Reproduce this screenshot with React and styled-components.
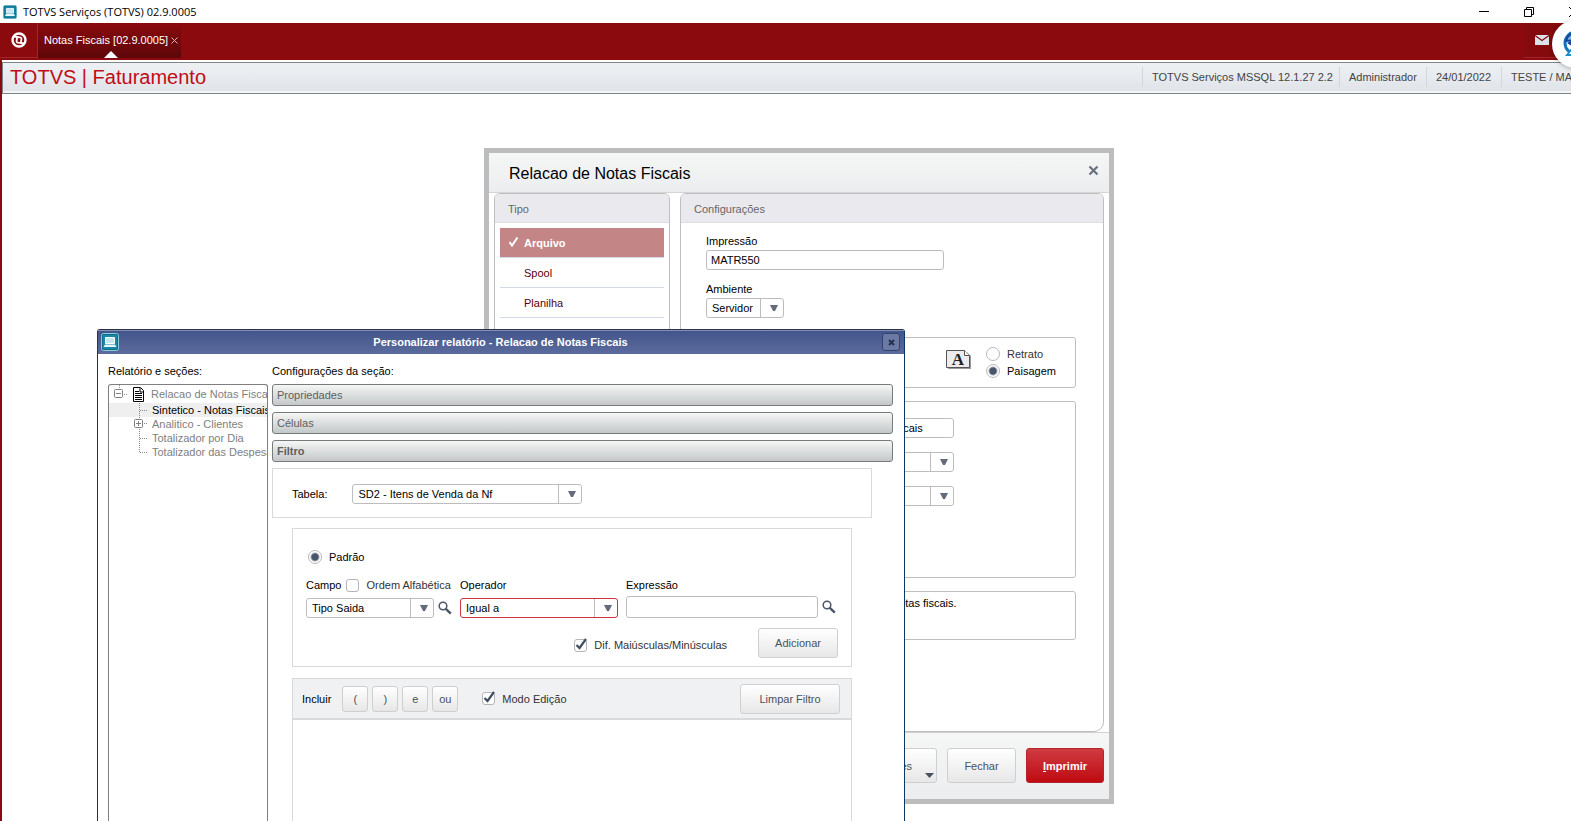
import React, { useState } from 'react';
import styled, { createGlobalStyle, css } from 'styled-components';

const GlobalStyle = createGlobalStyle`
  * {
    box-sizing: border-box;
  }

  body {
    margin: 0;
    background: #fff;
    color: #000;
    font-family: "Liberation Sans", Arial, sans-serif;
    font-size: 11px;
    line-height: 14px;
  }

  button, input, select, textarea {
    margin: 0;
    font: inherit;
    color: inherit;
  }

  button {
    cursor: pointer;
  }
`;

const Screen = styled.div`
  display: flex;
  flex-direction: column;
  height: 100vh;
  overflow: hidden;
  position: relative;
`;

/* system window */

const TitleBar = styled.header`
  display: flex;
  align-items: center;
  gap: 6px;
  flex: none;
  height: 23px;
  padding-left: 3px;
  font-family: "Open Sans", "Noto Sans", sans-serif;
  font-size: 11px;
  line-height: 16px;
`;

const SystemButtons = styled.div`
  display: flex;
  align-items: center;
  gap: 33px;
  margin-left: auto;
  margin-right: -9px;
`;

const BareButton = styled.button`
  display: flex;
  align-items: center;
  justify-content: center;
  padding: 0;
  border: 0;
  background: none;
`;

const TabBar = styled.nav`
  display: flex;
  flex: none;
  height: 37px;
  padding-bottom: 2px;
  background: #8a0a0e;
  color: #fff;
`;

const HomeButton = styled(BareButton)`
  width: 38px;
  border-right: 1px solid #a0272b;
  border-bottom: 1px solid #a0272b;
`;

const Tab = styled.div`
  display: flex;
  flex-direction: column;
  align-items: center;
  justify-content: space-between;
  padding: 10px 3px 0 6px;
  background: linear-gradient(#8a0a0e, #5e0709);
`;

const TabLabel = styled.div`
  display: flex;
  align-items: center;
  gap: 3px;
`;

const MailButton = styled(BareButton)`
  width: 36px;
  margin-left: auto;
  margin-right: 11px;
  border-bottom: 1px solid #9c2529;
  background: #840a0d;
`;

const Bubble = styled.div`
  position: absolute;
  top: 20px;
  right: -29px;
  display: flex;
  align-items: center;
  justify-content: center;
  width: 48px;
  height: 48px;
  border-radius: 50%;
  background: #fff;
  box-shadow: 0 1px 4px rgba(0, 0, 0, 0.3);
`;

const AppFrame = styled.div`
  display: flex;
  flex-direction: column;
  flex: 1;
  min-height: 0;
  padding-top: 2px;
  border-left: 2px solid #8a0a0e;
`;

const AppBar = styled.div`
  display: flex;
  align-items: center;
  flex: none;
  height: 32px;
  padding-bottom: 2px;
  border: solid #7f8486;
  border-width: 1px 0 1px 1px;
  background: linear-gradient(#eef1f4, #dfe3e8);
  box-shadow: inset 0 -2px #f2f4f6;
`;

const AppTitle = styled.h1`
  flex: 1;
  margin: 0;
  padding-left: 7px;
  color: #c00d15;
  font-size: 20px;
  font-weight: normal;
  line-height: 24px;
`;

const AppInfo = styled.span`
  flex: none;
  width: ${(p) => p.$width}px;
  padding: 3px 0 3px 9px;
  border-left: 1px solid #d3d7d9;
  color: #444;
  overflow: hidden;
  white-space: nowrap;
`;

const Desktop = styled.main`
  position: relative;
  flex: 1;
`;

/* controls */

const TextInput = styled.input`
  width: ${(p) => p.$width}px;
  height: ${(p) => (p.$tall ? 22 : 20)}px;
  padding: 0 4px;
  border: 1px solid #bdbdbd;
  border-radius: 3px;
  background: #fff;
  outline: 0;
`;

const SelectFrame = styled.span`
  display: grid;
  grid-template-columns: 1fr 23px;
  flex: none;
  width: ${(p) => p.$width}px;
  height: 20px;
  border: 1px solid ${(p) => (p.$required ? '#d0353d' : '#bdbdbd')};
  border-radius: 3px;
  background: #fff;
`;

const NativeSelect = styled.select`
  grid-area: 1 / 1 / 2 / 3;
  width: 100%;
  padding: 0 23px 0 5px;
  border: 0;
  background: none;
  appearance: none;
  outline: 0;
`;

const SelectArrow = styled.span`
  grid-area: 1 / 2;
  display: flex;
  align-items: center;
  justify-content: center;
  padding-left: 3px;
  border-left: 1px solid #bdbdbd;
  pointer-events: none;
`;

const Select = ({ id, options, width, required }) => (
  <SelectFrame $width={width} $required={required}>
    <NativeSelect id={id}>
      {options.map((o) => (
        <option key={o}>{o}</option>
      ))}
    </NativeSelect>
    <SelectArrow>
      <svg width="8" height="6" viewBox="0 0 8 6">
        <path d="M0 0h8L5 6H3z" fill="#646b7b" />
      </svg>
    </SelectArrow>
  </SelectFrame>
);

const Option = styled.label`
  display: flex;
  align-items: center;
  gap: 7px;
  color: ${(p) => p.$color || '#000'};
  white-space: nowrap;
`;

const Radio = styled.input.attrs({ type: 'radio' })`
  width: 14px;
  height: 14px;
  border: 1px solid #b9b9b9;
  border-radius: 50%;
  background: #fff;
  appearance: none;

  &:checked {
    background: radial-gradient(circle, #47546a 3px, #fff 5px);
  }
`;

const CheckFrame = styled.span`
  display: grid;
  width: 13px;
  height: 13px;

  > * {
    grid-area: 1 / 1;
  }

  svg {
    overflow: visible;
    pointer-events: none;
  }
`;

const CheckInput = styled.input.attrs({ type: 'checkbox' })`
  width: 13px;
  height: 13px;
  border: 1px solid #b5b5b5;
  border-radius: 3px;
  background: #fff;
  appearance: none;
`;

const Checkbox = ({ defaultChecked = false }) => {
  const [checked, setChecked] = useState(defaultChecked);
  return (
    <CheckFrame>
      <CheckInput checked={checked} onChange={(e) => setChecked(e.target.checked)} />
      {checked && (
        <svg width="13" height="13" viewBox="0 0 13 13">
          <path d="M2.5 6l3 3L12 0" fill="none" stroke="#414d61" strokeWidth="2.2" />
        </svg>
      )}
    </CheckFrame>
  );
};

const Button = styled.button`
  flex: none;
  width: ${(p) => p.$width}px;
  height: ${(p) => p.$height || 30}px;
  padding: 0;
  border: 1px solid #cfcfcf;
  border-radius: 3px;
  background: linear-gradient(#fff, #e7e7e7);
  color: #4a5160;

  ${(p) =>
    p.$primary &&
    css`
      border-color: #b5242a;
      background: linear-gradient(#cf3b41, #bf0a12);
      color: #fff;
      font-weight: bold;
    `}
`;

const SearchButton = ({ label }) => (
  <BareButton aria-label={label}>
    <svg width="14" height="14" viewBox="0 0 14 14" fill="none" stroke="#4a5569">
      <circle cx="5" cy="5" r="3.8" strokeWidth="1.5" />
      <path d="M7.8 7.8l5 4.8" strokeWidth="2.4" />
    </svg>
  </BareButton>
);

const ProgramIcon = ({ size }) => (
  <svg width={size} height={size} viewBox="0 0 18 18">
    <rect x=".5" y=".5" width="17" height="17" rx="2" fill="#1787a5" stroke="#8ccbd9" />
    <rect x="1.5" y="1.5" width="15" height="15" rx="1" fill="none" stroke="#0d6f8b" />
    <path d="M4.500 4.500h9v6h-9z" fill="#c4e6ef" stroke="#fff" />
    <path d="M4 11.500h10l1.500 2.500h-13z" fill="#e9f5f8" />
  </svg>
);

/* print dialog */

const PrintDialog = styled.section`
  position: absolute;
  left: 482px;
  top: 54px;
  width: 630px;
  border: 5px solid #bdbdbd;
  background: #fff;
`;

const DialogHeader = styled.div`
  display: flex;
  align-items: center;
  justify-content: space-between;
  height: 40px;
  padding: 0 10px 0 20px;
  border-bottom: 1px solid #d3d5d7;
  background: linear-gradient(#f5f7f6, #ebedef);
`;

const DialogClose = styled(BareButton)`
  padding-bottom: 4px;
`;

const DialogTitle = styled.h2`
  margin: 0;
  padding-top: 2px;
  font-size: 16px;
  font-weight: normal;
  line-height: 20px;
`;

const DialogColumns = styled.div`
  display: grid;
  grid-template-columns: 176px 1fr;
  gap: 10px;
  padding: 0 5px;
`;

const Panel = styled.div`
  border: 1px solid #bfbfbf;
  border-radius: 6px 6px 10px 10px;
  overflow: hidden;
`;

const PanelTitle = styled.h3`
  margin: 0;
  padding: 8px 13px 6px;
  border-bottom: 1px solid #dedee2;
  background: #eaeaee;
  color: #666;
  font-size: 11px;
  font-weight: normal;
`;

const TypeList = styled.ul`
  margin: 0;
  padding: 5px;
  list-style: none;
`;

const TypeItem = styled.li`
  border-bottom: 1px solid #d3dbeb;
`;

const TypeButton = styled.button`
  display: flex;
  align-items: center;
  gap: 5px;
  width: 100%;
  height: 29px;
  padding: 0 0 0 ${(p) => (p.$active ? 8 : 24)}px;
  border: 0;
  background: ${(p) => (p.$active ? '#c48586' : 'none')};
  color: ${(p) => (p.$active ? '#fff' : '#5a0009')};
  font-weight: ${(p) => (p.$active ? 'bold' : 'normal')};
`;

const PrintForm = styled.div`
  display: flex;
  flex-direction: column;
  padding: 11px 27px 91px 25px;
`;

const Field = styled.div`
  display: flex;
  flex-direction: column;
  gap: ${(p) => p.$gap}px;
`;

const PrintField = styled(Field)`
  margin-bottom: 12px;
`;

const GroupBox = styled.div`
  margin-top: ${(p) => (p.$first ? 7 : 13)}px;
  border: 1px solid #bfbfbf;
  border-radius: 3px;
`;

const Orientation = styled(GroupBox)`
  display: flex;
  align-items: center;
  justify-content: flex-end;
  gap: 14px;
  height: 51px;
`;

const PageIcon = styled.svg`
  margin-bottom: 6px;
`;

const OrientationOptions = styled.div`
  display: grid;
  gap: 3px;
  width: 89px;
`;

const ReportOptions = styled(GroupBox)`
  display: grid;
  grid-template-columns: 72px 1fr;
  grid-auto-rows: 20px;
  align-items: center;
  row-gap: 14px;
  height: 177px;
  padding: 16px 14px;
`;

const Description = styled(GroupBox)`
  height: 49px;
  padding: 4px 2px;
`;

const DialogFooter = styled.div`
  display: flex;
  justify-content: flex-end;
  gap: 10px;
  padding: 15px 5px 16px;
  border-top: 1px solid #cfd1d3;
  background: linear-gradient(#f5f7f6, #ebedef);
`;

const MenuButton = styled(Button)`
  display: flex;
  align-items: center;
  justify-content: space-between;
  padding: 0 2px 0 18px;

  svg {
    align-self: flex-end;
    margin-bottom: 4px;
  }
`;

/* report customization window */

const ReportWindow = styled.section`
  position: absolute;
  left: 95px;
  top: 235px;
  bottom: 0;
  display: flex;
  flex-direction: column;
  width: 808px;
  border: solid #0a3a66;
  border-width: 1px 1px 0;
  border-top-color: #2b3245;
  border-radius: 3px 3px 0 0;
  background: #fff;
`;

const WindowBar = styled.div`
  display: grid;
  grid-template-columns: 18px 1fr 18px;
  align-items: center;
  flex: none;
  height: 24px;
  padding: 0 4px 0 3px;
  background: linear-gradient(#41548a, #5c6b9d);
  box-shadow: inset 0 1px #8390b5;
  color: #fff;
  text-align: center;
`;

const WindowTitle = styled.h2`
  margin: 0;
  font-size: 11px;
  font-weight: bold;
`;

const WindowClose = styled(BareButton)`
  width: 18px;
  height: 18px;
  border: 1px solid #33426f;
  border-radius: 3px;
  background: #6b79a5;
`;

const WindowBody = styled.div`
  display: grid;
  grid-template-columns: 160px 1fr;
  gap: 4px;
  flex: 1;
  min-height: 0;
  padding: 10px 11px 0 10px;
`;

const WindowColumn = styled.div`
  display: flex;
  flex-direction: column;
  gap: 6px;
  min-width: 0;
`;

const TreeView = styled.ul`
  flex: 1;
  margin: 0;
  padding: 0;
  border: 1px solid #7f7f7f;
  border-bottom: 0;
  border-radius: 3px 3px 0 0;
  list-style: none;
  overflow: hidden;
`;

const TreeNode = styled.li`
  display: flex;
  align-items: center;
  height: ${(p) => (p.$root ? 18 : 14)}px;
  background: ${(p) => (p.$selected ? '#efefef' : 'none')};
  color: ${(p) => (p.$selected ? '#000' : '#808080')};
  white-space: nowrap;

  svg {
    flex: none;
  }
`;

const Accordion = styled.button`
  flex: none;
  height: 22px;
  padding: 0 4px;
  border: 1px solid #777b7b;
  border-radius: 3px;
  background: linear-gradient(#f5f6f6, #c3c8c8);
  color: #5f5f5f;
  font-weight: ${(p) => (p.$open ? 'bold' : 'normal')};
  text-align: left;
`;

const TableBox = styled.div`
  display: flex;
  align-items: center;
  gap: 25px;
  flex: none;
  height: 50px;
  margin-right: 21px;
  padding: 2px 0 0 19px;
  border: 1px solid #d9d9d9;
`;

const FilterBox = styled.div`
  display: flex;
  flex-direction: column;
  margin: 4px 41px 0 20px;
  padding: 21px 13px 8px;
  border: 1px solid #d9d9d9;
`;

const ModeOption = styled(Option)`
  padding-left: 2px;
`;

const FilterFields = styled.div`
  display: flex;
  align-items: flex-end;
  gap: 8px;
  margin: 14px 0 10px;
`;

const FieldHeading = styled.div`
  display: flex;
  gap: 5px;
  height: 14px;
`;

const WithSearch = styled.div`
  display: flex;
  align-items: center;
  gap: 4px;
`;

const FilterActions = styled.div`
  display: flex;
  align-items: center;
  justify-content: flex-end;
  gap: 31px;
`;

const CaseOption = styled(Option)`
  padding-top: 4px;
`;

const Expression = styled.div`
  display: flex;
  flex-direction: column;
  flex: 1;
  margin: 5px 41px 0 20px;
  border: 1px solid #d9d9d9;
  border-bottom: 0;
`;

const ExpressionBar = styled.div`
  display: flex;
  align-items: center;
  height: 41px;
  padding: 0 11px 0 9px;
  border-bottom: 2px solid #d9d9d9;
  background: #f0f1f3;
`;

const Tokens = styled.div`
  display: flex;
  gap: 4px;
  margin: 0 24px 0 11px;
`;

const ClearButton = styled(Button)`
  margin-left: auto;
`;

const ExpressionText = styled.textarea`
  flex: 1;
  border: 0;
  outline: 0;
  resize: none;
`;

const types = ['Arquivo', 'Spool', 'Planilha'];
const tokens = ['(', ')', 'e', 'ou'];

const PrintSettings = () => (
  <PrintDialog>
    <DialogHeader>
      <DialogTitle>Relacao de Notas Fiscais</DialogTitle>
      <DialogClose aria-label="Fechar janela">
        <svg width="11" height="11" viewBox="0 0 11 11">
          <path d="M1.5 1.5l8 8M9.5 1.5l-8 8" stroke="#69707e" strokeWidth="2.2" />
        </svg>
      </DialogClose>
    </DialogHeader>
    <DialogColumns>
      <Panel>
        <PanelTitle>Tipo</PanelTitle>
        <TypeList>
          {types.map((type, i) => (
            <TypeItem key={type}>
              <TypeButton $active={i === 0}>
                {i === 0 && (
                  <svg width="11" height="11" viewBox="0 0 11 11">
                    <path d="M1.500 5l2.500 3.500L9.500.5" fill="none" stroke="#fff" strokeWidth="2" />
                  </svg>
                )}
                {type}
              </TypeButton>
            </TypeItem>
          ))}
        </TypeList>
      </Panel>
      <Panel>
        <PanelTitle>Configurações</PanelTitle>
        <PrintForm>
          <PrintField $gap={2}>
            <label htmlFor="impressao">Impressão</label>
            <TextInput id="impressao" $width={238} defaultValue="MATR550" />
          </PrintField>
          <PrintField $gap={2}>
            <label htmlFor="ambiente">Ambiente</label>
            <Select id="ambiente" width={78} options={['Servidor']} />
          </PrintField>
          <Orientation $first>
            <PageIcon width="26" height="20" viewBox="0 0 26 20">
              <path d="M2 2h19l4 4v13H2z" fill="#9a9a9a" />
              <path d="M.5.5h18l5 5v12H.5z" fill="#ececec" stroke="#555" />
              <path d="M18.5.5v5h5" fill="#fff" stroke="#555" />
              <text x="12" y="15" textAnchor="middle" fontFamily="Liberation Serif, serif" fontSize="17" fontWeight="bold" fill="#222">
                A
              </text>
            </PageIcon>
            <OrientationOptions>
              <Option $color="#333">
                <Radio name="orientacao" />
                Retrato
              </Option>
              <Option>
                <Radio name="orientacao" defaultChecked />
                Paisagem
              </Option>
            </OrientationOptions>
          </Orientation>
          <ReportOptions>
            <label htmlFor="titulo">Título</label>
            <TextInput id="titulo" $width={161} defaultValue="Relacao de Notas Fiscais" />
            <label htmlFor="ordem">Ordem</label>
            <Select id="ordem" width={161} options={['Nota']} />
            <label htmlFor="layout">Layout</label>
            <Select id="layout" width={161} options={['Padrão']} />
          </ReportOptions>
          <Description>Este programa ira emitir a relacao de notas fiscais.</Description>
        </PrintForm>
      </Panel>
    </DialogColumns>
    <DialogFooter>
      <MenuButton $width={110} $height={35}>
        Outras Ações
        <svg width="9" height="5" viewBox="0 0 9 5">
          <path d="M0 0h9L4.500 5z" fill="#4a5160" />
        </svg>
      </MenuButton>
      <Button $width={69} $height={35}>
        Fechar
      </Button>
      <Button $width={78} $height={35} $primary>
        <u>I</u>mprimir
      </Button>
    </DialogFooter>
  </PrintDialog>
);

const dots = { fill: 'none', stroke: '#8a8a8a', strokeDasharray: '1 1' };

const SectionTree = () => (
  <TreeView>
    <TreeNode $root>
      <svg width="42" height="18" viewBox="0 0 42 18">
        <path d="M10.500 0v5M15 9.500h4" {...dots} />
        <rect x="5.500" y="4.500" width="8" height="8" rx="1" fill="#fff" stroke="#808080" />
        <path d="M7 8.500h5" stroke="#808080" />
        <path d="M24.500 2.500h7l3 3v11h-10z" fill="#fff" stroke="#000" />
        <path d="M31 3v4h4M26 6.500h4M26 8.500h7M26 10.500h7M26 12.500h7M26 14.500h7" fill="none" stroke="#000" />
      </svg>
      Relacao de Notas Fiscais
    </TreeNode>
    <TreeNode $selected>
      <svg width="43" height="14" viewBox="0 0 43 14">
        <path d="M30.500 0v14M31 7.500h8" {...dots} />
      </svg>
      Sintetico - Notas Fiscais
    </TreeNode>
    <TreeNode>
      <svg width="43" height="14" viewBox="0 0 43 14">
        <path d="M30.500 0v14M35 6.500h4" {...dots} />
        <rect x="25.500" y="2.500" width="8" height="8" rx="1" fill="#fff" stroke="#808080" />
        <path d="M27 6.500h5M29.500 4v5" stroke="#808080" />
      </svg>
      Analitico - Clientes
    </TreeNode>
    <TreeNode>
      <svg width="43" height="14" viewBox="0 0 43 14">
        <path d="M30.500 0v14M31 7.500h8" {...dots} />
      </svg>
      Totalizador por Dia
    </TreeNode>
    <TreeNode>
      <svg width="43" height="14" viewBox="0 0 43 14">
        <path d="M30.500 0v7.500h8" {...dots} />
      </svg>
      Totalizador das Despesas
    </TreeNode>
  </TreeView>
);

const CustomizeReport = () => (
  <ReportWindow>
    <WindowBar>
      <ProgramIcon size={18} />
      <WindowTitle>Personalizar relatório - Relacao de Notas Fiscais</WindowTitle>
      <WindowClose aria-label="Fechar janela">
        <svg width="7" height="7" viewBox="0 0 7 7">
          <path d="M1 1l5 5M6 1L1 6" stroke="#252d4a" strokeWidth="1.800" />
        </svg>
      </WindowClose>
    </WindowBar>
    <WindowBody>
      <WindowColumn>
        <span>Relatório e seções:</span>
        <SectionTree />
      </WindowColumn>
      <WindowColumn>
        <span>Configurações da seção:</span>
        <Accordion>Propriedades</Accordion>
        <Accordion>Células</Accordion>
        <Accordion $open>Filtro</Accordion>
        <TableBox>
          <label htmlFor="tabela">Tabela:</label>
          <Select id="tabela" width={230} options={['SD2 - Itens de Venda da Nf']} />
        </TableBox>
        <FilterBox>
          <ModeOption>
            <Radio name="modo" defaultChecked />
            Padrão
          </ModeOption>
          <FilterFields>
            <Field $gap={6}>
              <FieldHeading>
                <label htmlFor="campo">Campo</label>
                <Option $color="#333">
                  <Checkbox />
                  Ordem Alfabética
                </Option>
              </FieldHeading>
              <WithSearch>
                <Select id="campo" width={128} options={['Tipo Saida']} />
                <SearchButton label="Pesquisar campo" />
              </WithSearch>
            </Field>
            <Field $gap={6}>
              <label htmlFor="operador">Operador</label>
              <Select id="operador" width={158} options={['Igual a']} required />
            </Field>
            <Field $gap={4}>
              <label htmlFor="expressao">Expressão</label>
              <WithSearch>
                <TextInput id="expressao" $width={192} $tall />
                <SearchButton label="Pesquisar expressão" />
              </WithSearch>
            </Field>
          </FilterFields>
          <FilterActions>
            <CaseOption $color="#333">
              <Checkbox defaultChecked />
              Dif. Maiúsculas/Minúsculas
            </CaseOption>
            <Button $width={80}>Adicionar</Button>
          </FilterActions>
        </FilterBox>
        <Expression>
          <ExpressionBar>
            <span>Incluir</span>
            <Tokens>
              {tokens.map((token) => (
                <Button key={token} $width={26} $height={26}>
                  {token}
                </Button>
              ))}
            </Tokens>
            <Option $color="#333">
              <Checkbox defaultChecked />
              Modo Edição
            </Option>
            <ClearButton $width={100}>Limpar Filtro</ClearButton>
          </ExpressionBar>
          <ExpressionText aria-label="Filtro" />
        </Expression>
      </WindowColumn>
    </WindowBody>
  </ReportWindow>
);

const App = () => (
  <Screen>
    <GlobalStyle />
    <TitleBar>
      <ProgramIcon size={14} />
      TOTVS Serviços (TOTVS) 02.9.0005
      <SystemButtons>
        <BareButton aria-label="Minimizar">
          <svg width="12" height="12" viewBox="0 0 12 12">
            <path d="M1 5.500h10" stroke="#000" />
          </svg>
        </BareButton>
        <BareButton aria-label="Restaurar">
          <svg width="12" height="12" viewBox="0 0 12 12" fill="none" stroke="#000">
            <path d="M1.500 3.500h7v7h-7zM3.500 3.500v-2h7v7h-2" />
          </svg>
        </BareButton>
        <BareButton aria-label="Fechar">
          <svg width="12" height="12" viewBox="0 0 12 12">
            <path d="M1 1l10 10M11 1L1 11" stroke="#000" />
          </svg>
        </BareButton>
      </SystemButtons>
    </TitleBar>
    <TabBar>
      <HomeButton aria-label="Início">
        <svg width="16" height="16" viewBox="0 0 16 16" fill="none" stroke="#fff">
          <circle cx="8" cy="8" r="6.500" strokeWidth="2.400" />
          <path d="M2.500 4.500l6.500.9c1.200.2 1.600 1 1.400 2L9.800 11" strokeWidth="1.800" />
          <path d="M13.500 11.500l-6.500-.9c-1.200-.2-1.600-1-1.400-2L6.200 5" strokeWidth="1.800" />
        </svg>
      </HomeButton>
      <Tab>
        <TabLabel>
          Notas Fiscais [02.9.0005]
          <BareButton aria-label="Fechar aba">
            <svg width="7" height="7" viewBox="0 0 7 7">
              <path d="M.5.5l6 6M6.500.5l-6 6" stroke="#d9b5b6" />
            </svg>
          </BareButton>
        </TabLabel>
        <svg width="14" height="7" viewBox="0 0 14 7">
          <path d="M7 0l7 7H0z" fill="#fff" />
        </svg>
      </Tab>
      <MailButton aria-label="Mensagens">
        <svg width="14" height="10" viewBox="0 0 14 10">
          <path d="M0 0h14v10H0z" fill="#dbe3e8" />
          <path d="M0 .5l7 5 7-5" fill="none" stroke="#840a0d" strokeWidth="1.200" />
        </svg>
      </MailButton>
    </TabBar>
    <AppFrame>
      <AppBar>
        <AppTitle>TOTVS | Faturamento</AppTitle>
        <AppInfo $width={197}>TOTVS Serviços MSSQL 12.1.27 2.2</AppInfo>
        <AppInfo $width={87}>Administrador</AppInfo>
        <AppInfo $width={75}>24/01/2022</AppInfo>
        <AppInfo $width={70}>TESTE / MATRIZ</AppInfo>
      </AppBar>
      <Desktop>
        <PrintSettings />
        <CustomizeReport />
      </Desktop>
    </AppFrame>
    <Bubble>
      <svg width="26" height="26" viewBox="0 0 26 26">
        <circle cx="13" cy="12" r="11" fill="#fff" stroke="#1573b8" strokeWidth="3" />
        <path d="M3 10C5 2 12 1 18 2l-4 7z" fill="#7db4e0" stroke="#16469c" strokeWidth="2" />
        <path d="M4 12l5-3v6z" fill="#16469c" />
        <path d="M4 24l4-5 3 5z" fill="#fff" stroke="#1a8fd0" strokeWidth="2" />
      </svg>
    </Bubble>
  </Screen>
);

export default App;
